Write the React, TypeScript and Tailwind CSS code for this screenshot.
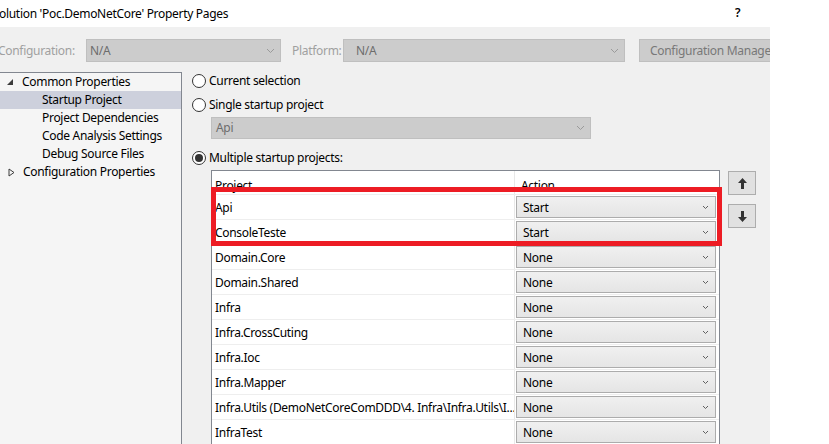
import React from "react";

const font = { fontFamily: '"Noto Sans", "Segoe UI", sans-serif', letterSpacing: "-0.3px" };

function Chevron({ color = "#8a8a8a" }: { color?: string }) {
  return (
    <svg width="9" height="6" viewBox="0 0 9 6">
      <polyline points="1,1 4.5,4.5 8,1" fill="none" stroke={color} strokeWidth="1" />
    </svg>
  );
}

function SmallChevron() {
  return (
    <svg width="7" height="5" viewBox="0 0 7 5">
      <polyline points="1,1 3.5,3.5 6,1" fill="none" stroke="#606060" strokeWidth="1" />
    </svg>
  );
}

function Radio({ checked }: { checked?: boolean }) {
  return (
    <div className="w-[14px] h-[14px] rounded-full border border-[#333333] bg-white flex items-center justify-center shrink-0">
      {checked && <div className="w-[8px] h-[8px] rounded-full bg-[#333333]" />}
    </div>
  );
}

const rows: [string, string][] = [
  ["Api", "Start"],
  ["ConsoleTeste", "Start"],
  ["Domain.Core", "None"],
  ["Domain.Shared", "None"],
  ["Infra", "None"],
  ["Infra.CrossCuting", "None"],
  ["Infra.Ioc", "None"],
  ["Infra.Mapper", "None"],
  ["Infra.Utils (DemoNetCoreComDDD\\4. Infra\\Infra.Utils\\I...", "None"],
  ["InfraTest", "None"],
  ["Tests", "None"],
];

export default function App() {
  return (
    <div
      className="w-[829px] h-[444px] overflow-hidden bg-white flex flex-col text-[12px] text-black leading-none"
      style={font}
    >
      {/* Title bar */}
      <div className="h-[27px] shrink-0 flex items-center relative">
        <span className="ml-[-1px]">olution 'Poc.DemoNetCore' Property Pages</span>
        <span className="absolute left-[735px] top-[7px] font-semibold">?</span>
      </div>

      <div className="flex flex-1 min-h-0">
        {/* gray area */}
        <div className="w-[770px] shrink-0 bg-[#f0f0f0] overflow-hidden flex flex-col">
          {/* configuration row */}
          <div className="flex items-center mt-[12px] h-[23px] shrink-0 whitespace-nowrap">
            <span className="text-[#a0a0a0] ml-[-2px] w-[88px] shrink-0">Configuration:</span>
            <div className="w-[195px] shrink-0 h-[23px] bg-[#cccccc] border border-[#bfbfbf] flex items-center justify-between pl-[3px] pr-[5px] text-[#6d6d6d]">
              <span>N/A</span>
              <Chevron color="#9a9a9a" />
            </div>
            <span className="text-[#a0a0a0] ml-[11px] w-[51px] shrink-0">Platform:</span>
            <div className="w-[282px] shrink-0 h-[23px] bg-[#cccccc] border border-[#bfbfbf] flex items-center justify-between pl-[12px] pr-[5px] text-[#6d6d6d]">
              <span>N/A</span>
              <Chevron color="#9a9a9a" />
            </div>
            <div className="ml-[14px] w-[150px] shrink-0 h-[23px] bg-[#cccccc] border border-[#bfbfbf] flex items-center pl-[10px] text-[#787878]">
              Configuration Manager...
            </div>
          </div>

          <div className="flex mt-[10px] flex-1 min-h-0">
            {/* tree panel */}
            <div className="w-[183px] ml-[-1px] shrink-0 border-t border-r border-[#828790] bg-[#f5f5f5] flex flex-col">
              <div className="h-[18px] shrink-0 flex items-center">
                <svg width="8" height="8" viewBox="0 0 8 8" className="ml-[7px]">
                  <polygon points="7,1 7,7 1,7" fill="#3c3c3c" />
                </svg>
                <span className="ml-[8px]">Common Properties</span>
              </div>
              <div className="h-[18px] shrink-0 flex items-center bg-[#cdd0dc] pl-[43px]">Startup Project</div>
              <div className="h-[18px] shrink-0 flex items-center pl-[43px]">Project Dependencies</div>
              <div className="h-[18px] shrink-0 flex items-center pl-[43px]">Code Analysis Settings</div>
              <div className="h-[18px] shrink-0 flex items-center pl-[43px]">Debug Source Files</div>
              <div className="h-[18px] shrink-0 flex items-center">
                <svg width="7" height="9" viewBox="0 0 7 9" className="ml-[9px]">
                  <polygon points="1,1 6,4.5 1,8" fill="none" stroke="#3c3c3c" strokeWidth="1" />
                </svg>
                <span className="ml-[8px]">Configuration Properties</span>
              </div>
            </div>

            {/* right content */}
            <div className="flex flex-col pl-[10px] flex-1 min-w-0">
              <div className="h-[18px] shrink-0 flex items-center gap-[3px]">
                <Radio />
                <span>Current selection</span>
              </div>
              <div className="h-[18px] shrink-0 mt-[6px] flex items-center gap-[3px]">
                <Radio />
                <span>Single startup project</span>
              </div>
              <div className="ml-[19px] shrink-0 mt-[3px] w-[380px] h-[22px] bg-[#cccccc] border border-[#bfbfbf] flex items-center justify-between pl-[4px] pr-[5px] text-[#6d6d6d]">
                <span>Api</span>
                <Chevron color="#9a9a9a" />
              </div>
              <div className="h-[18px] shrink-0 mt-[10px] flex items-center gap-[3px]">
                <Radio checked />
                <span>Multiple startup projects:</span>
              </div>

              <div className="flex shrink-0 mt-[3px] ml-[19px] relative">
                {/* table */}
                <div className="w-[509px] shrink-0 bg-white border-l border-t border-r border-[#828790]">
                  <div className="h-[23px] flex">
                    <div className="w-[303px] pl-[3px] pt-[9px] border-r border-[#e8e8e8]">Project</div>
                    <div className="flex-1 pl-[6px] pt-[9px]">Action</div>
                  </div>
                  {rows.map(([name, action], i) => (
                    <div key={i} className="h-[25px] flex border-t border-[#eeeeee]">
                      <div className="w-[303px] shrink-0 pl-[3px] pt-[1px] flex items-center border-r border-[#e8e8e8] whitespace-nowrap overflow-hidden">
                        {name}
                      </div>
                      <div className="flex-1 flex items-center pl-[1px]">
                        <div className="w-[200px] h-[22px] border border-[#acacac] bg-gradient-to-b from-[#f0f0f0] to-[#e5e5e5] flex items-center justify-between pl-[6px] pr-[6px]">
                          <span className="pt-[1px]">{action}</span>
                          <SmallChevron />
                        </div>
                      </div>
                    </div>
                  ))}
                </div>

                {/* up/down buttons */}
                <div className="flex flex-col ml-[8px] pt-[1px] gap-[9px]">
                  <div className="w-[28px] h-[24px] bg-[#e1e1e1] border border-[#adadad] flex items-center justify-center">
                    <svg width="11" height="13" viewBox="0 0 11 13">
                      <path d="M5.5 1 L1 6 L4 6 L4 12 L7 12 L7 6 L10 6 Z" fill="#333333" />
                    </svg>
                  </div>
                  <div className="w-[28px] h-[24px] bg-[#e1e1e1] border border-[#adadad] flex items-center justify-center">
                    <svg width="11" height="13" viewBox="0 0 11 13">
                      <path d="M5.5 12 L1 7 L4 7 L4 1 L7 1 L7 7 L10 7 Z" fill="#333333" />
                    </svg>
                  </div>
                </div>

                {/* red highlight overlay */}
                <div className="absolute left-0 top-[17px] w-[511px] h-[59px] border-[5px] border-[#ed1c24] pointer-events-none" />
              </div>
            </div>
          </div>
        </div>
        <div className="flex-1 bg-white" />
      </div>
    </div>
  );
}
